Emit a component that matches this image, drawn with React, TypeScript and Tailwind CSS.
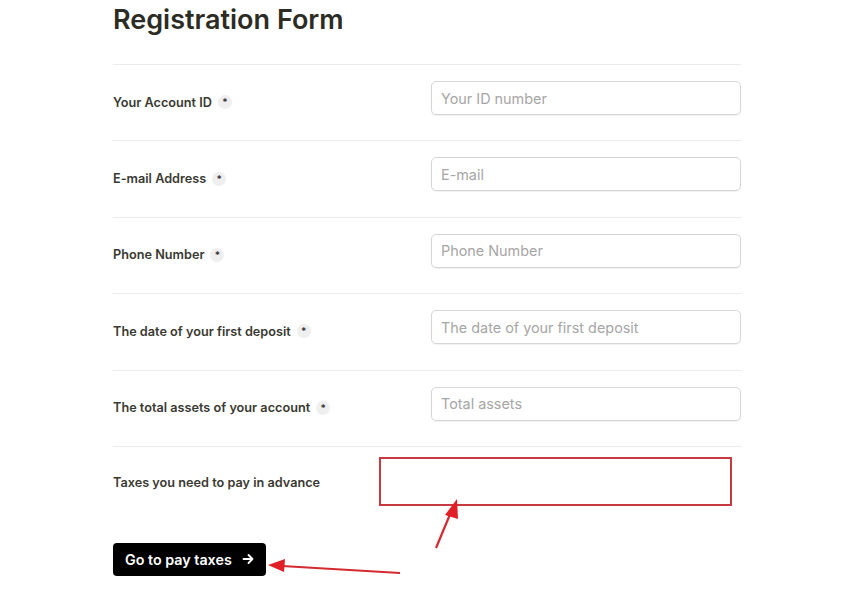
import React from 'react';

const fields = [
  { label: 'Your Account ID', placeholder: 'Your ID number' },
  { label: 'E-mail Address', placeholder: 'E-mail' },
  { label: 'Phone Number', placeholder: 'Phone Number' },
  { label: 'The date of your first deposit', placeholder: 'The date of your first deposit' },
  { label: 'The total assets of your account', placeholder: 'Total assets' },
];

function Required() {
  return (
    <span className="ml-[6px] inline-flex h-[14px] w-[14px] items-center justify-center rounded-full bg-[#efefef] text-[10px] leading-none text-[#333]">
      *
    </span>
  );
}

export default function App() {
  return (
    <div className="relative h-[600px] w-[851px] overflow-hidden bg-white" style={{ fontFamily: 'Inter, "Noto Sans", sans-serif' }}>
      <div className="ml-[113px] w-[628px]">
        <h1 className="pt-[3px] text-[27px] font-semibold leading-[34px] text-[#2c2c24]">Registration Form</h1>

        <div className="mt-[27px]">
          {fields.map((f) => (
            <div key={f.label} className="grid h-[76.4px] grid-cols-[318px_310px] border-t border-[#ececec]">
              <div className="flex items-center pb-[1px] text-[12.7px] font-semibold text-[#3a3a32]">
                {f.label}
                <Required />
              </div>
              <input
                placeholder={f.placeholder}
                className="mt-[16px] h-[34px] w-[310px] rounded-[5px] border border-[#d6d6d6] px-[9px] text-[14.4px] shadow-[0_1px_1px_rgba(0,0,0,0.06)] outline-none placeholder:text-[#a6a6a6]"
              />
            </div>
          ))}

          <div className="relative flex h-[72px] items-center border-t border-[#ececec]">
            <span className="text-[12.7px] font-semibold text-[#3a3a32]">Taxes you need to pay in advance</span>
            <div className="absolute left-[266px] top-[10px] h-[49px] w-[353px] border-2 border-[#c73a41]" />
          </div>
        </div>

        <button className="mt-[25px] flex h-[33px] items-center gap-[10px] rounded-[4px] bg-black pl-[12px] pr-[12px] text-[14.3px] font-semibold text-white">
          Go to pay taxes
          <svg width="12" height="12" viewBox="0 0 12 12" fill="none" stroke="white" strokeWidth="1.8" strokeLinecap="round" strokeLinejoin="round">
            <path d="M1.5 6h9M6.5 2l4 4-4 4" />
          </svg>
        </button>
      </div>

      <svg className="pointer-events-none absolute left-0 top-0" width="851" height="600">
        <line x1="436" y1="548" x2="451" y2="512" stroke="#d42a30" strokeWidth="2.2" />
        <polygon points="457,499 445,515 458,519" fill="#e01f26" />
        <line x1="400" y1="573" x2="282" y2="566" stroke="#d42a30" strokeWidth="2.2" />
        <polygon points="268,565 285,559 284,572" fill="#e01f26" />
      </svg>
    </div>
  );
}
